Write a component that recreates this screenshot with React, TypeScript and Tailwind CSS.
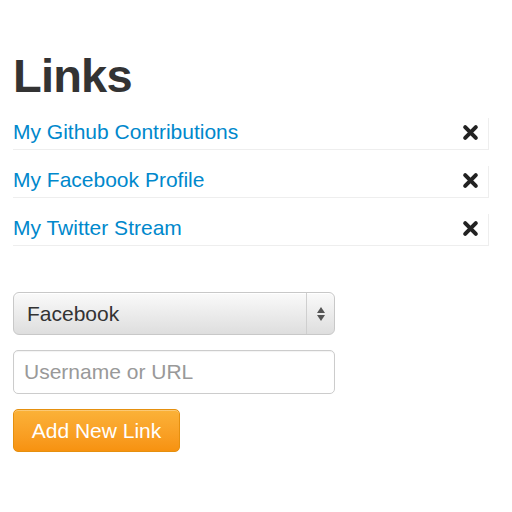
import React from "react";

const links = ["My Github Contributions", "My Facebook Profile", "My Twitter Stream"];

function XIcon() {
  return (
    <svg width="17" height="17" viewBox="0 0 16 16">
      <path d="M3 3 L13 13 M13 3 L3 13" stroke="#222" strokeWidth="3.8" strokeLinecap="round" />
    </svg>
  );
}

export default function App() {
  return (
    <div className="w-[512px] h-[512px] bg-white px-[13px] pt-[48px]" style={{ fontFamily: '"Liberation Sans", Arial, sans-serif' }}>
      <h1 className="text-[47px] font-bold text-[#333] leading-[56px] tracking-[-0.8px]">Links</h1>
      <div className="mt-[14px] w-[476px]">
        {links.map((l) => (
          <div key={l} className="h-[32px] mb-[16px] flex items-center justify-between border-b border-r border-[#eeeeee] pr-[9px]">
            <a className="text-[21px] text-[#0088cc] leading-[24px] -mt-[4px]">{l}</a>
            <span className="-mt-[2px]"><XIcon /></span>
          </div>
        ))}
      </div>
      <div className="mt-[46px] w-[322px] flex flex-col">
        <div className="h-[43px] rounded-[6px] border border-[#c8c8c8] bg-gradient-to-b from-[#fafafa] to-[#dedede] flex items-center shadow-[inset_0_1px_0_#fff]">
          <span className="flex-1 pl-[13px] text-[21px] text-[#333]">Facebook</span>
          <div className="w-[28px] h-full border-l border-[#cfcfcf] flex flex-col items-center justify-center gap-[2px]">
            <svg width="10" height="16" viewBox="0 0 10 16">
              <path d="M5 1 L9 7 L1 7 Z" fill="#555" />
              <path d="M5 15 L9 9 L1 9 Z" fill="#555" />
            </svg>
          </div>
        </div>
        <div className="mt-[15px] h-[44px] rounded-[5px] border border-[#cccccc] bg-white flex items-center pl-[10px] shadow-[inset_0_1px_1px_rgba(0,0,0,0.05)]">
          <span className="text-[21px] text-[#999]">Username or URL</span>
        </div>
        <button className="mt-[15px] w-[167px] h-[43px] rounded-[5px] border border-[#e5900f] bg-gradient-to-b from-[#fbb238] to-[#f7920f] text-white text-[21px] flex items-center justify-center shadow-[inset_0_1px_0_rgba(255,255,255,0.3)]">
          Add New Link
        </button>
      </div>
    </div>
  );
}
